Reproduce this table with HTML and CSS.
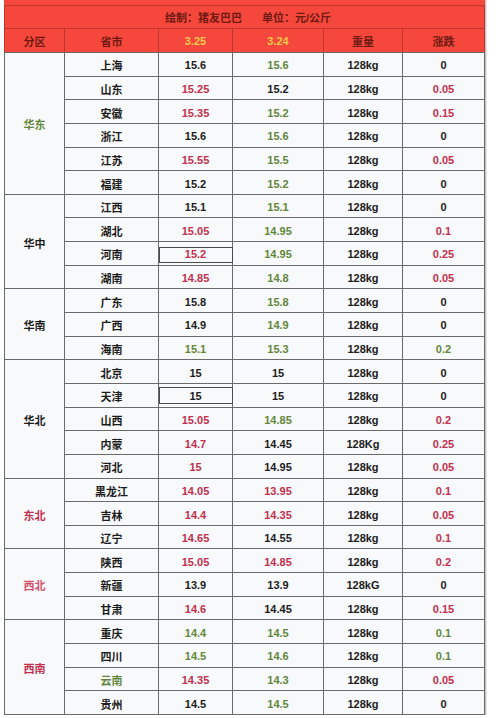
FILE: index.html
```html
<!DOCTYPE html>
<html lang="zh">
<head>
<meta charset="utf-8">
<title>猪价表</title>
<link rel="stylesheet" href="styles.css">
</head>
<body>
<div class="sheet">
  <div class="head">
    <div class="topbar"></div>
    <div class="title"><span>绘制：猪友巴巴</span><span>单位：元/公斤</span></div>
    <div class="hc">分区</div>
    <div class="hc">省市</div>
    <div class="hc y">3.25</div>
    <div class="hc y">3.24</div>
    <div class="hc">重量</div>
    <div class="hc">涨跌</div>
  </div>
  <div class="body">
    <div class="region g span6">华东</div>
    <div class="c">上海</div><div class="c">15.6</div><div class="c g">15.6</div><div class="c">128kg</div><div class="c">0</div>
    <div class="c">山东</div><div class="c r">15.25</div><div class="c">15.2</div><div class="c">128kg</div><div class="c r">0.05</div>
    <div class="c">安徽</div><div class="c r">15.35</div><div class="c g">15.2</div><div class="c">128kg</div><div class="c r">0.15</div>
    <div class="c">浙江</div><div class="c">15.6</div><div class="c g">15.6</div><div class="c">128kg</div><div class="c">0</div>
    <div class="c">江苏</div><div class="c r">15.55</div><div class="c g">15.5</div><div class="c">128kg</div><div class="c r">0.05</div>
    <div class="c">福建</div><div class="c">15.2</div><div class="c g">15.2</div><div class="c">128kg</div><div class="c">0</div>

    <div class="region span4">华中</div>
    <div class="c">江西</div><div class="c">15.1</div><div class="c g">15.1</div><div class="c">128kg</div><div class="c">0</div>
    <div class="c">湖北</div><div class="c r">15.05</div><div class="c g">14.95</div><div class="c">128kg</div><div class="c r">0.1</div>
    <div class="c">河南</div><div class="c r boxed boxa">15.2</div><div class="c g">14.95</div><div class="c">128kg</div><div class="c r">0.25</div>
    <div class="c">湖南</div><div class="c r">14.85</div><div class="c g">14.8</div><div class="c">128kg</div><div class="c r">0.05</div>

    <div class="region span3">华南</div>
    <div class="c">广东</div><div class="c">15.8</div><div class="c g">15.8</div><div class="c">128kg</div><div class="c">0</div>
    <div class="c">广西</div><div class="c">14.9</div><div class="c g">14.9</div><div class="c">128kg</div><div class="c">0</div>
    <div class="c">海南</div><div class="c g">15.1</div><div class="c g">15.3</div><div class="c">128kg</div><div class="c g">0.2</div>

    <div class="region span5">华北</div>
    <div class="c">北京</div><div class="c">15</div><div class="c">15</div><div class="c">128kg</div><div class="c">0</div>
    <div class="c">天津</div><div class="c boxed boxb">15</div><div class="c">15</div><div class="c">128kg</div><div class="c">0</div>
    <div class="c">山西</div><div class="c r">15.05</div><div class="c g">14.85</div><div class="c">128kg</div><div class="c r">0.2</div>
    <div class="c">内蒙</div><div class="c r">14.7</div><div class="c">14.45</div><div class="c">128Kg</div><div class="c r">0.25</div>
    <div class="c">河北</div><div class="c r">15</div><div class="c">14.95</div><div class="c">128kg</div><div class="c r">0.05</div>

    <div class="region r span3">东北</div>
    <div class="c">黑龙江</div><div class="c r">14.05</div><div class="c r">13.95</div><div class="c">128kg</div><div class="c r">0.1</div>
    <div class="c">吉林</div><div class="c r">14.4</div><div class="c r">14.35</div><div class="c">128kg</div><div class="c r">0.05</div>
    <div class="c">辽宁</div><div class="c r">14.65</div><div class="c">14.55</div><div class="c">128kg</div><div class="c r">0.1</div>

    <div class="region pk span3">西北</div>
    <div class="c">陕西</div><div class="c r">15.05</div><div class="c r">14.85</div><div class="c">128kg</div><div class="c r">0.2</div>
    <div class="c">新疆</div><div class="c">13.9</div><div class="c">13.9</div><div class="c">128kG</div><div class="c">0</div>
    <div class="c">甘肃</div><div class="c r">14.6</div><div class="c">14.45</div><div class="c">128kg</div><div class="c r">0.15</div>

    <div class="region r span4">西南</div>
    <div class="c">重庆</div><div class="c g">14.4</div><div class="c g">14.5</div><div class="c">128kg</div><div class="c g">0.1</div>
    <div class="c">四川</div><div class="c g">14.5</div><div class="c g">14.6</div><div class="c">128kg</div><div class="c g">0.1</div>
    <div class="c g">云南</div><div class="c r">14.35</div><div class="c g">14.3</div><div class="c">128kg</div><div class="c r">0.05</div>
    <div class="c">贵州</div><div class="c">14.5</div><div class="c g">14.5</div><div class="c">128kg</div><div class="c">0</div>
  </div>
</div>
</body>
</html>
```

FILE: styles.css
```css
html, body {
  margin: 0;
  padding: 0;
  background: #ffffff;
}

body {
  font-family: "Liberation Sans", "Noto Sans CJK SC", sans-serif;
  font-size: 11px;
  font-weight: bold;
  color: #1c1c1c;
}

.sheet {
  margin-left: 4px;
  width: 481px;
  box-shadow: 1px 0 0 #c4c4c4, 2px 0 0 #e6e6e6;
}

.head {
  display: grid;
  grid-template-columns: 59px 93px 73px 90px 78px 81px;
  grid-template-rows: 5px 22px 23px;
  gap: 1px;
  padding: 0 1px;
  background: #c1362c;
}

.topbar {
  grid-column: 1 / -1;
  background: #f5473c;
  margin: 0 -1px;
}

.title {
  grid-column: 1 / -1;
  background: #f5473c;
  display: flex;
  justify-content: center;
  align-items: center;
  gap: 20px;
  padding-left: 7px;
  color: #6e1a12;
  font-size: 11px;
}

.hc {
  background: #f5473c;
  color: #6e1a12;
  display: flex;
  align-items: center;
  justify-content: center;
  padding-top: 1px;
}

.hc.y {
  color: #f8c84a;
}

.body {
  display: grid;
  grid-template-columns: 59px 93px 73px 90px 78px 81px;
  grid-template-rows: repeat(28, 1fr);
  gap: 1px;
  padding: 1px;
  height: 663px;
  box-sizing: border-box;
  background: #6a6a6a;
}

.c, .region {
  background: #f8f9fb;
  display: flex;
  align-items: center;
  justify-content: center;
  padding-top: 2px;
  box-sizing: border-box;
}

.region {
  grid-column: 1;
  font-weight: bold;
}

.span6 { grid-row: span 6; }
.span5 { grid-row: span 5; }
.span4 { grid-row: span 4; }
.span3 { grid-row: span 3; }

.r { color: #c1304d; }
.g { color: #62873a; }
.pk { color: #d4506a; }

.boxed {
  position: relative;
}

.boxed::after {
  content: "";
  position: absolute;
  left: 0;
  right: -1px;
  border: 1px solid #4a4a4a;
}

.boxa::after {
  top: 5px;
  bottom: 2px;
}

.boxb::after {
  top: 3px;
  bottom: 3px;
}
```
